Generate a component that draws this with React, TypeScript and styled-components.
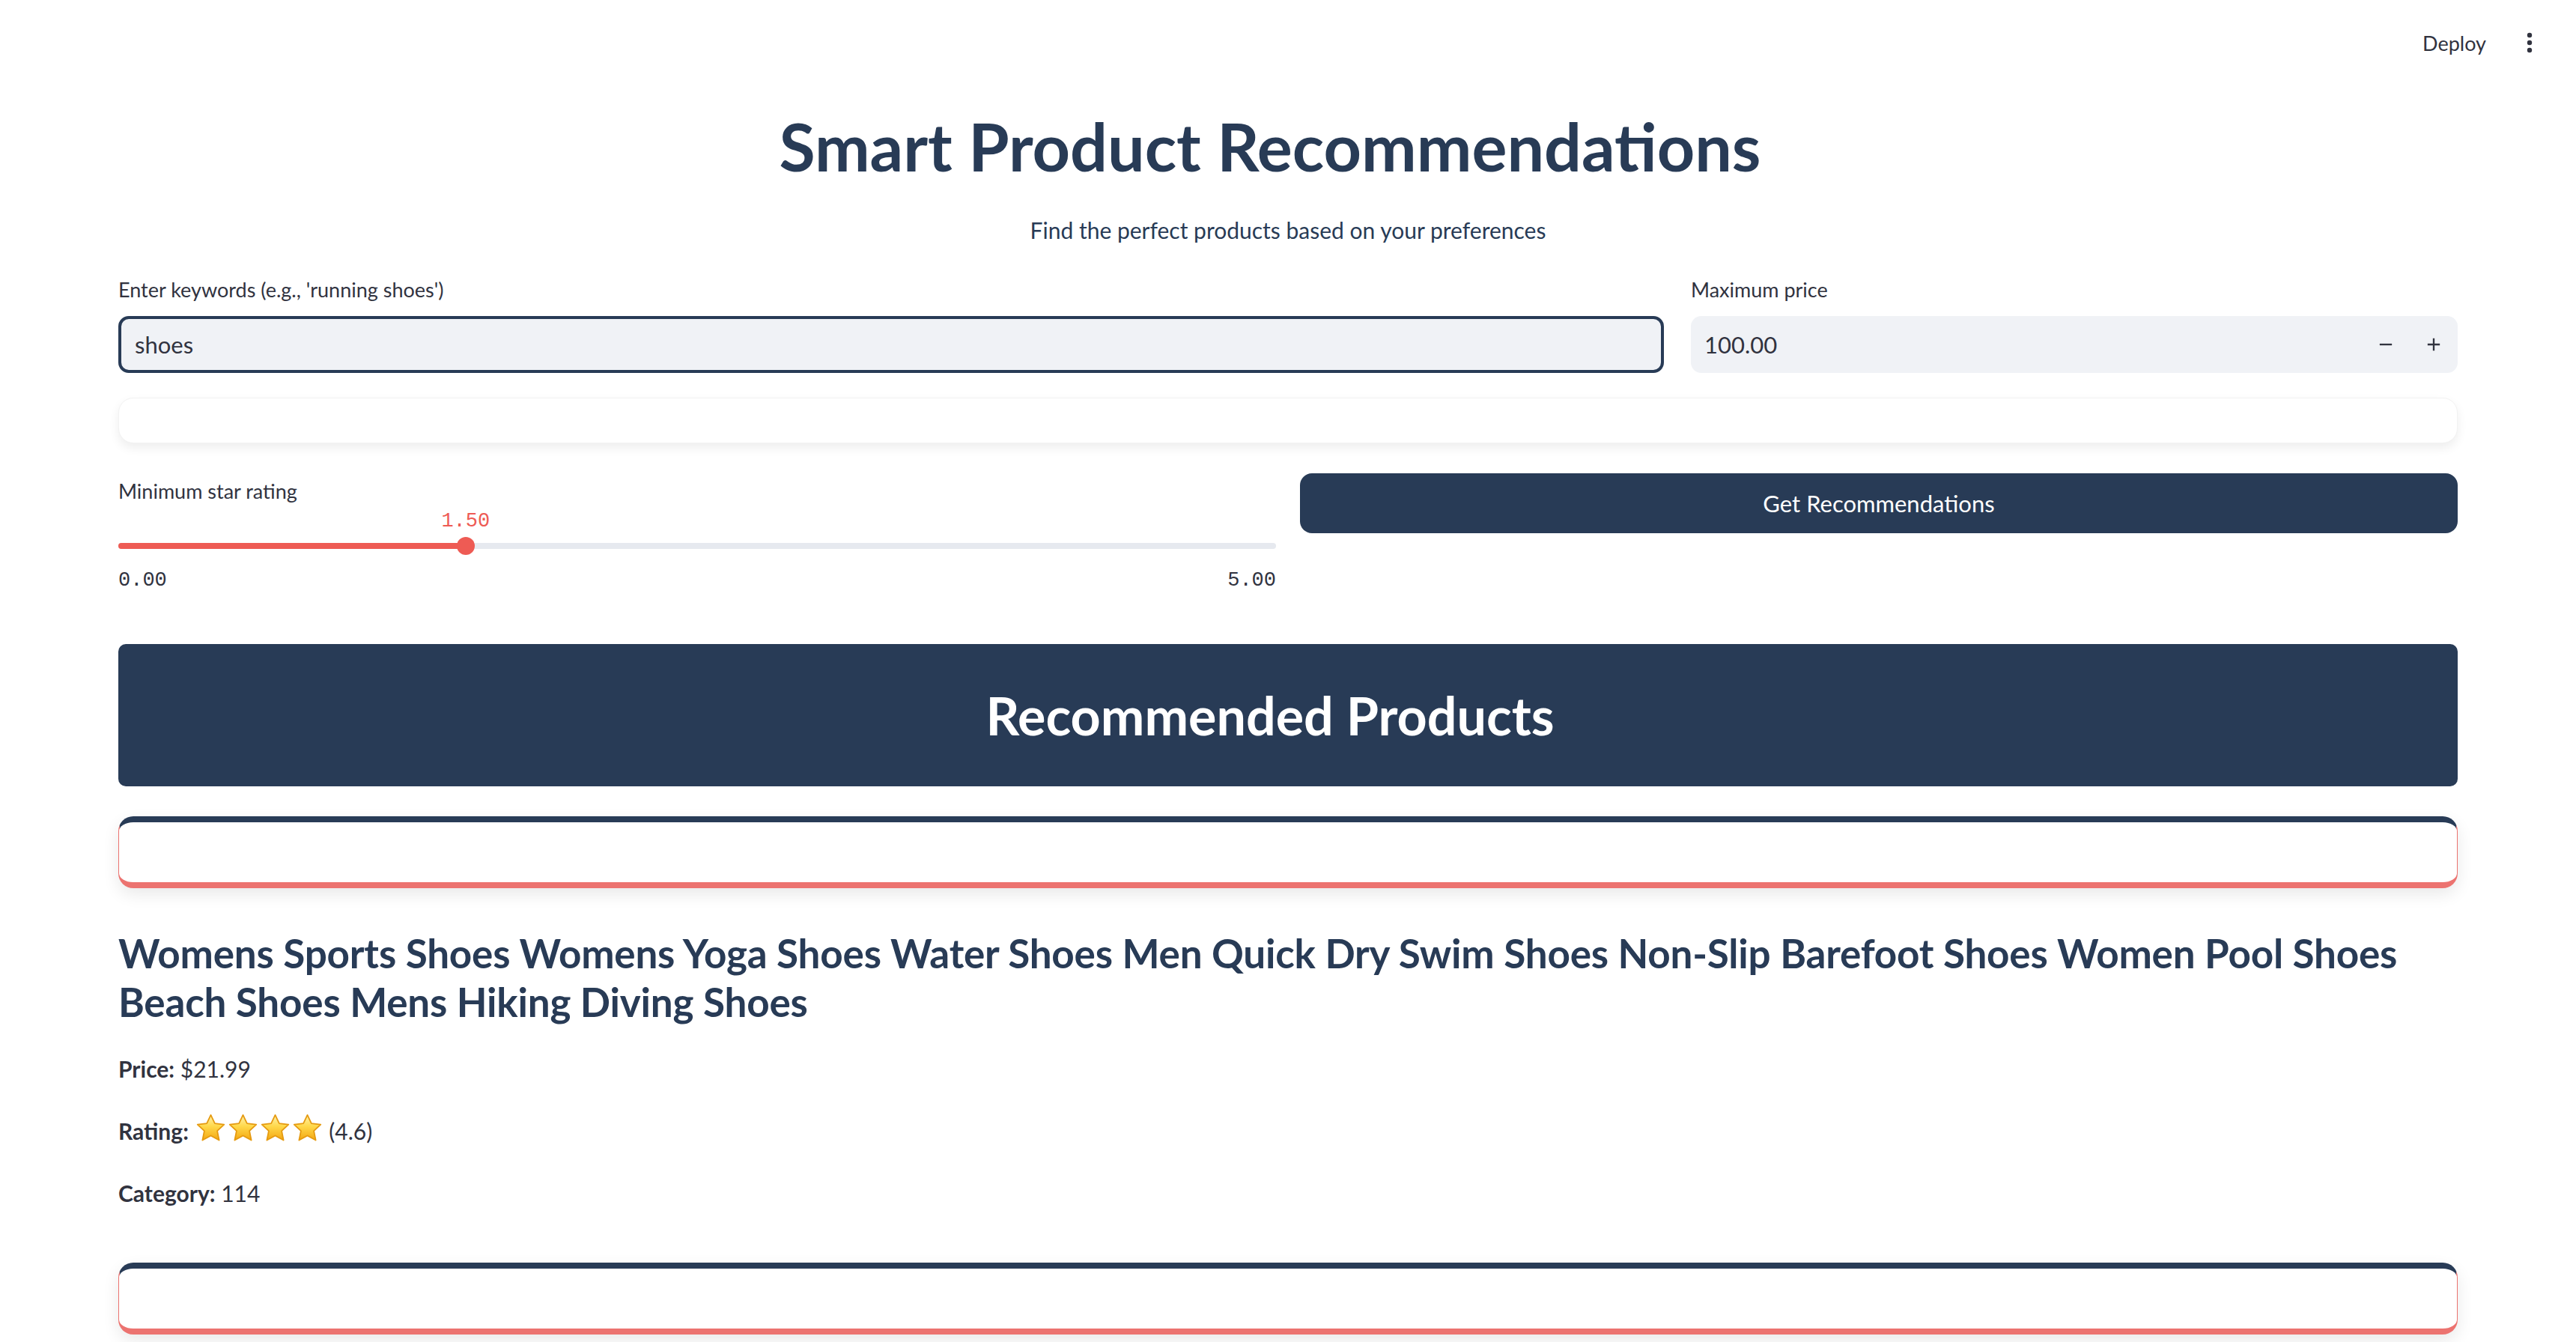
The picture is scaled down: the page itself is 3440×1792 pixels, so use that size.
import styled, {createGlobalStyle} from "styled-components";
import {MdAdd, MdRemove} from "react-icons/md";

const navy = "#283b56";
const ink = "#31333f";
const coral = "#ee5b54";

const product = {
    title: "Womens Sports Shoes Womens Yoga Shoes Water Shoes Men Quick Dry Swim Shoes Non-Slip Barefoot Shoes Women Pool Shoes Beach Shoes Mens Hiking Diving Shoes",
    price: "$21.99",
    rating: 4.6,
    category: 114,
};

const slider = {min: 0, max: 5, value: 1.5};

export default function App() {
    const pct = ((slider.value - slider.min) / (slider.max - slider.min)) * 100;
    const stars = Math.floor(product.rating);

    return (
        <>
            <GlobalStyle/>
            <AppView>
                <Header>
                    <DeployButton>Deploy</DeployButton>
                    <MenuButton aria-label="Main menu">
                        <svg width="12" height="28" viewBox="0 0 12 28">
                            <circle cx="6" cy="4" r="3.2" fill={ink}/>
                            <circle cx="6" cy="14" r="3.2" fill={ink}/>
                            <circle cx="6" cy="24" r="3.2" fill={ink}/>
                        </svg>
                    </MenuButton>
                </Header>

                <Main>
                    <Title>Smart Product Recommendations<AnchorSlot/></Title>
                    <Subtitle>Find the perfect products based on your preferences</Subtitle>

                    <Columns $cols="2064fr 1024fr" $gap={36} $top={36}>
                        <Field>
                            <Label>Enter keywords (e.g., 'running shoes')</Label>
                            <TextInput defaultValue="shoes"/>
                        </Field>
                        <Field>
                            <Label>Maximum price</Label>
                            <NumberBox>
                                <NumberValue>100.00</NumberValue>
                                <StepButton aria-label="Decrement"><MdRemove size={28}/></StepButton>
                                <StepButton aria-label="Increment"><MdAdd size={28}/></StepButton>
                            </NumberBox>
                        </Field>
                    </Columns>

                    <BlankCard/>

                    <Columns $cols="1fr 1fr" $gap={32} $top={40}>
                        <SliderField>
                            <Label>Minimum star rating</Label>
                            <ValueRow>
                                <ThumbValue style={{left: `${pct}%`}}>{slider.value.toFixed(2)}</ThumbValue>
                            </ValueRow>
                            <TrackArea>
                                <Track>
                                    <TrackFill style={{width: `${pct}%`}}/>
                                </Track>
                                <Thumb style={{left: `${pct}%`}}/>
                            </TrackArea>
                            <TickRow>
                                <span>{slider.min.toFixed(2)}</span>
                                <span>{slider.max.toFixed(2)}</span>
                            </TickRow>
                        </SliderField>
                        <PrimaryButton>Get Recommendations</PrimaryButton>
                    </Columns>

                    <Banner>
                        <BannerTitle>Recommended Products<AnchorSlot/></BannerTitle>
                    </Banner>

                    <ProductCard $top={40}/>

                    <ProductTitle>{product.title}</ProductTitle>
                    <Detail><strong>Price:</strong> {product.price}</Detail>
                    <Detail>
                        <strong>Rating:</strong>{" "}
                        <Stars>
                            {Array.from({length: stars}).map((_, i) => <Star key={i} id={`star-${i}`}/>)}
                        </Stars>{" "}
                        ({product.rating})
                    </Detail>
                    <Detail><strong>Category:</strong> {product.category}</Detail>

                    <ProductCard $top={67}/>
                </Main>
            </AppView>
        </>
    );
}

function Star({id}: {id: string}) {
    return (
        <StarIcon viewBox="0 0 24 24">
            <defs>
                <linearGradient id={id} x1="0" y1="0" x2="0" y2="1">
                    <stop offset="0" stopColor="#fff3b0"/>
                    <stop offset="0.45" stopColor="#ffd84a"/>
                    <stop offset="1" stopColor="#f3a712"/>
                </linearGradient>
            </defs>
            <path
                d="M12 1.6l3 6.3 6.9.8-5.1 4.8 1.4 6.9L12 17l-6.2 3.4 1.4-6.9-5.1-4.8 6.9-.8z"
                fill={`url(#${id})`}
                stroke="#e59a10"
                strokeWidth="1"
                strokeLinejoin="round"
            />
        </StarIcon>
    );
}

const GlobalStyle = createGlobalStyle`
    html, body {
        margin: 0;
        padding: 0;
        background: #ffffff;
    }
    body {
        font-family: "Lato", "Noto Sans", sans-serif;
        color: ${ink};
    }
    * {
        box-sizing: border-box;
    }
`;

const AppView = styled.div`
    height: 100vh;
    overflow: hidden;
    background: #ffffff;
`;

const Header = styled.header`
    height: 120px;
    display: flex;
    align-items: center;
    justify-content: flex-end;
    gap: 52px;
    padding: 0 56px 6px 0;
`;

const DeployButton = styled.button`
    border: none;
    background: transparent;
    font-family: inherit;
    font-size: 27px;
    color: ${ink};
    padding: 0;
    cursor: pointer;
`;

const MenuButton = styled.button`
    border: none;
    background: transparent;
    padding: 0;
    display: flex;
    align-items: center;
`;

const Main = styled.main`
    padding: 0 158px 80px;
`;

const AnchorSlot = styled.span`
    display: inline-block;
    width: 48px;
`;

const Title = styled.h1`
    margin: 23px 0 0;
    text-align: center;
    font-size: 88px;
    font-weight: 700;
    line-height: 1.2;
    color: ${navy};
`;

const Subtitle = styled.p`
    margin: 34px 0 0;
    text-align: center;
    font-size: 30px;
    line-height: 1.6;
    color: ${navy};
`;

const Columns = styled.div<{ $cols: string; $gap: number; $top: number }>`
    display: grid;
    grid-template-columns: ${p => p.$cols};
    gap: ${p => p.$gap}px;
    margin-top: ${p => p.$top}px;
    align-items: start;
`;

const Field = styled.div`
    display: flex;
    flex-direction: column;
`;

const Label = styled.label`
    font-size: 27px;
    line-height: 40px;
    color: ${ink};
    margin-bottom: 15px;
`;

const TextInput = styled.input`
    height: 76px;
    border: 4px solid ${navy};
    border-radius: 14px;
    background: #f0f2f6;
    padding: 0 18px;
    font-family: inherit;
    font-size: 31px;
    color: ${ink};
    outline: none;
`;

const NumberBox = styled.div`
    height: 76px;
    display: flex;
    align-items: center;
    border-radius: 14px;
    background: #f0f2f6;
    padding-left: 18px;
`;

const NumberValue = styled.span`
    flex: 1;
    font-size: 31px;
    color: ${ink};
`;

const StepButton = styled.button`
    width: 64px;
    height: 100%;
    border: none;
    background: transparent;
    display: flex;
    align-items: center;
    justify-content: center;
    color: ${ink};
    padding: 0;
`;

const BlankCard = styled.div`
    height: 61px;
    margin-top: 33px;
    background: #ffffff;
    border: 1px solid #f2f2f2;
    border-radius: 20px;
    box-shadow: 0 6px 14px rgba(0, 0, 0, 0.07);
`;

const SliderField = styled.div`
    display: flex;
    flex-direction: column;
    padding-top: 4px;
`;

const ValueRow = styled.div`
    position: relative;
    height: 32px;
    margin-top: -11px;
`;

const ThumbValue = styled.span`
    position: absolute;
    top: 0;
    transform: translateX(-50%);
    font-family: "Liberation Mono", monospace;
    font-size: 27px;
    line-height: 32px;
    color: ${coral};
`;

const TrackArea = styled.div`
    position: relative;
    height: 34px;
    display: flex;
    align-items: center;
`;

const Track = styled.div`
    width: 100%;
    height: 8px;
    border-radius: 4px;
    background: #e6e9ef;
    overflow: hidden;
`;

const TrackFill = styled.div`
    height: 100%;
    background: ${coral};
`;

const Thumb = styled.div`
    position: absolute;
    top: 50%;
    width: 24px;
    height: 24px;
    border-radius: 50%;
    background: ${coral};
    transform: translate(-50%, -50%);
`;

const TickRow = styled.div`
    display: flex;
    justify-content: space-between;
    margin-top: 9px;
    font-family: "Liberation Mono", monospace;
    font-size: 27px;
    line-height: 40px;
    color: ${ink};
`;

const PrimaryButton = styled.button`
    height: 80px;
    border: none;
    border-radius: 16px;
    background: ${navy};
    color: #ffffff;
    font-family: inherit;
    font-size: 31px;
`;

const Banner = styled.div`
    height: 190px;
    margin-top: 65px;
    border-radius: 10px;
    background: ${navy};
    display: flex;
    align-items: center;
    justify-content: center;
`;

const BannerTitle = styled.h2`
    margin: 0;
    font-size: 70px;
    font-weight: 700;
    line-height: 1.2;
    color: #ffffff;
`;

const ProductCard = styled.div<{ $top: number }>`
    height: 96px;
    margin-top: ${p => p.$top}px;
    background: #ffffff;
    border: 1px solid #ec7370;
    border-top: 8px solid ${navy};
    border-bottom: 8px solid #ec7370;
    border-radius: 20px;
    box-shadow: 0 8px 22px rgba(0, 0, 0, 0.09);
`;

const ProductTitle = styled.h3`
    margin: 54px 0 0;
    font-size: 53px;
    font-weight: 700;
    line-height: 65px;
    letter-spacing: -0.2px;
    color: ${navy};
`;

const Detail = styled.p`
    margin: 32px 0 0;
    font-size: 30px;
    line-height: 51px;
    color: ${ink};

    strong {
        font-weight: 700;
    }

    &:first-of-type {
        margin-top: 35px;
    }
`;

const Stars = styled.span`
    display: inline-flex;
    vertical-align: -7px;
`;

const StarIcon = styled.svg`
    width: 43px;
    height: 43px;
`;
